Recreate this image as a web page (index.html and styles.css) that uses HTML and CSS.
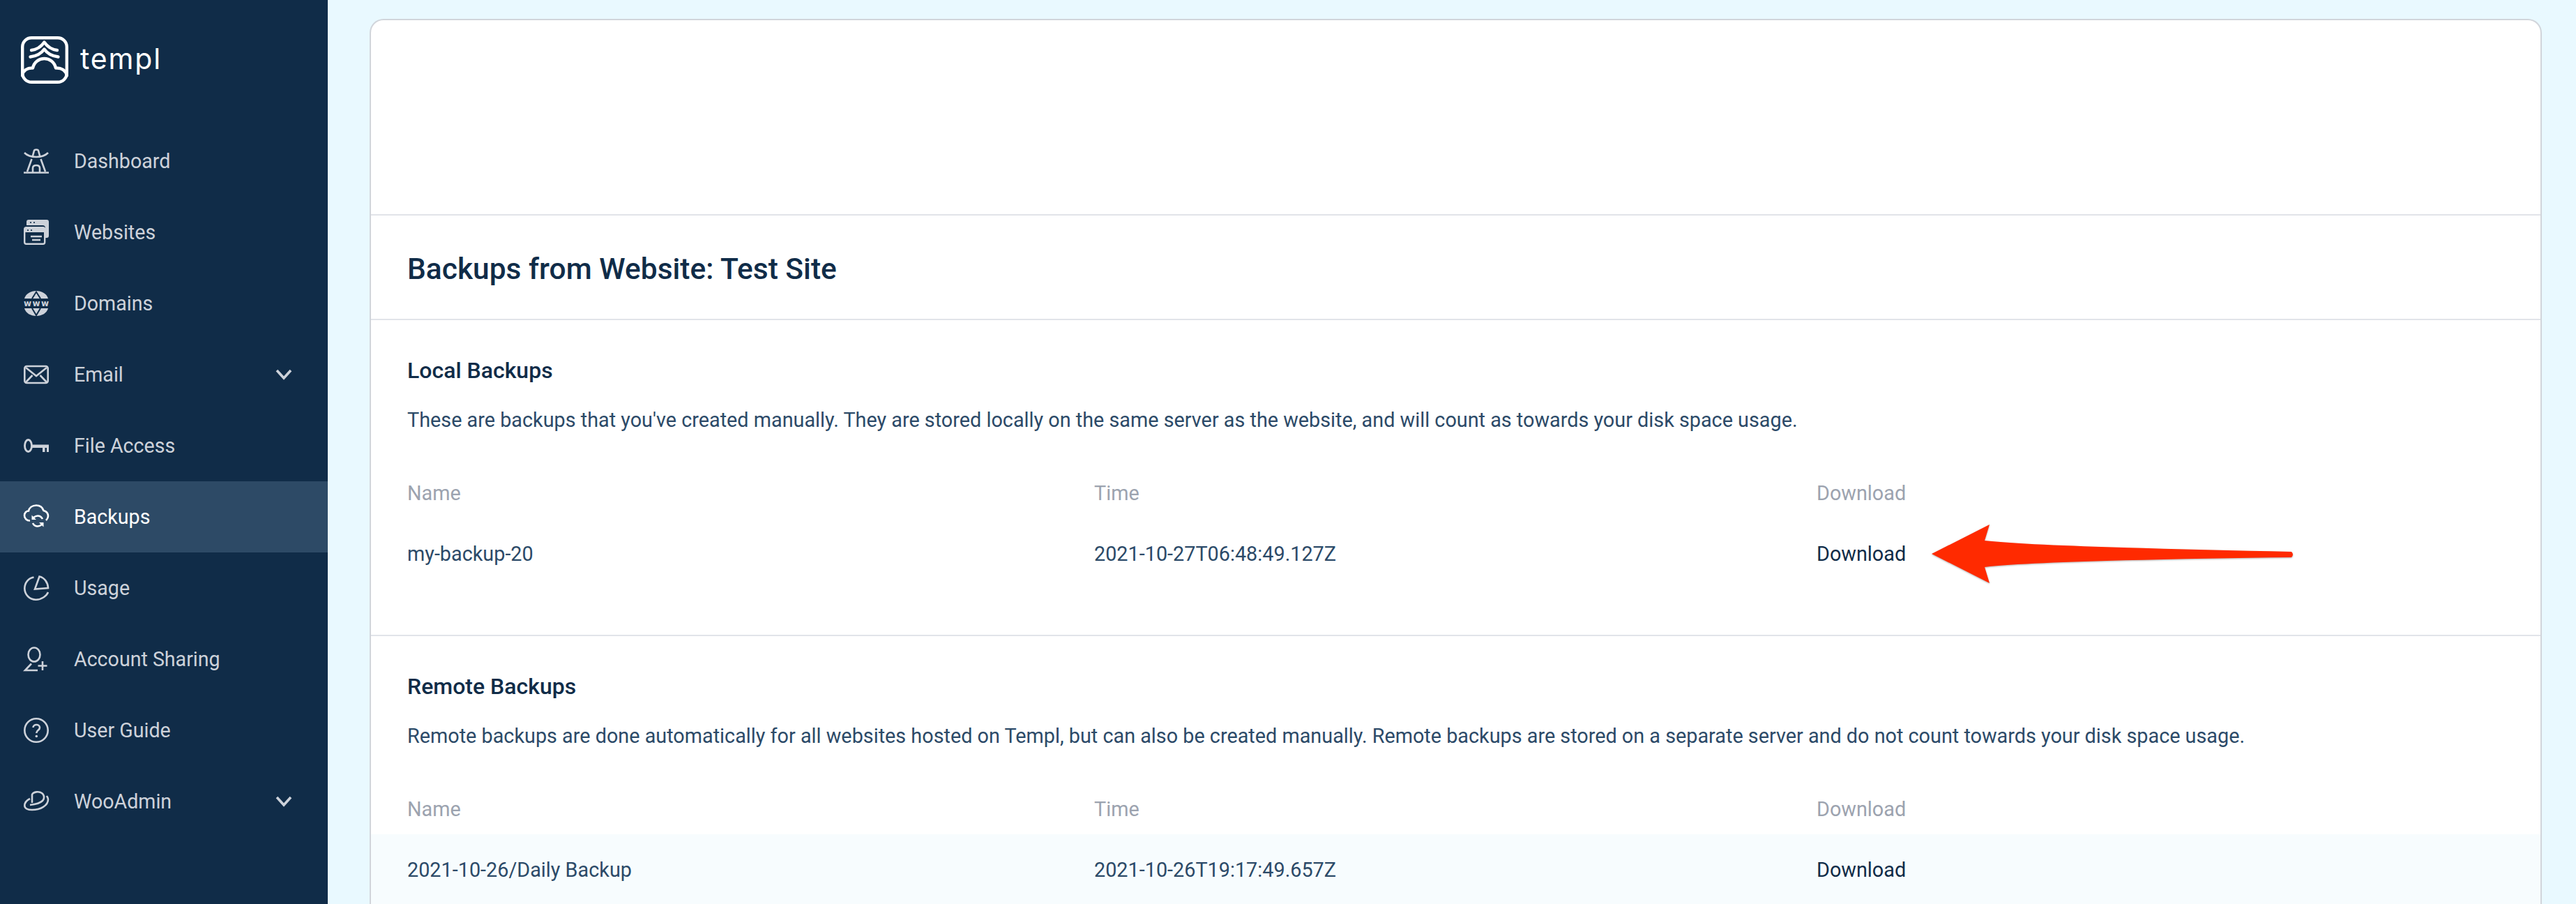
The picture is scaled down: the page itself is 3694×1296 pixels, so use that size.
FILE: index.html
```html
<!DOCTYPE html>
<html lang="en">
<head>
<meta charset="utf-8">
<title>Templ Backups</title>
<link rel="stylesheet" href="styles.css">
</head>
<body>
<div class="app">
  <aside class="sidebar">
    <div class="brand">
      <svg class="brand-mark" viewBox="0 0 68 68" fill="none" stroke="#fff" stroke-width="4.4" stroke-linecap="round" stroke-linejoin="round">
        <rect x="2.2" y="2.2" width="63.6" height="63.6" rx="13"/>
        <path d="M15 20 C23 19 29 15 33.5 8.5 C38 15 44 19 52 20"/>
        <path d="M13.5 29.5 C22 28.5 29 25 33.5 18.5 C38 25 45 28.5 53.5 29.5"/>
        <path d="M2 56 C3 49 9 45 17 45.5 C19 37 26 32 33.5 32 C41 32 48 37 50 45.5 C58 45 64 49 66 56"/>
      </svg>
      <span class="brand-name">templ</span>
    </div>
    <nav class="nav">
      <a class="nav-item">
        <svg class="nav-icon" viewBox="0 0 36 36" fill="none" stroke="currentColor" stroke-width="2.6">
          <path d="M1 6 C6 11 12 12 18 12 C24 12 30 11 35 6"/>
          <path d="M12.5 12 L15 3 Q15.5 1.5 18 1.5 Q20.5 1.5 21 3 L23.5 12"/>
          <path d="M11.5 15 L5 33 M24.5 15 L31 33"/>
          <path d="M0 34.5 H36"/>
          <path d="M13 34 V28 C13 25 15 24 18 24 C21 24 23 25 23 28 V34"/>
        </svg>
        <span>Dashboard</span>
      </a>
      <a class="nav-item">
        <svg class="nav-icon" viewBox="0 0 36 36">
          <path fill="currentColor" d="M7 0 H33 Q36 0 36 3 V23 Q36 26 33 26 H31 V12 Q31 8 27 8 H4 V3 Q4 0 7 0 Z"/>
          <rect x="1.2" y="11.2" width="29" height="23.6" rx="2.5" fill="none" stroke="currentColor" stroke-width="2.4"/>
          <path fill="currentColor" d="M2 12 H30 V18 H2 Z"/>
          <path d="M10 24 H26 M12 29 H24" stroke="currentColor" stroke-width="2.4"/>
          <circle cx="6" cy="15" r="1.1" fill="#102c48"/><circle cx="11" cy="15" r="1.1" fill="#102c48"/>
          <circle cx="10" cy="4" r="1.1" fill="#102c48"/><circle cx="15" cy="4" r="1.1" fill="#102c48"/>
        </svg>
        <span>Websites</span>
      </a>
      <a class="nav-item">
        <svg class="nav-icon" viewBox="0 0 36 36">
          <path fill="currentColor" d="M1 11 C3 4 10 0 18 0 C26 0 33 4 35 11 Z"/>
          <path fill="currentColor" d="M1 25 C3 32 10 36 18 36 C26 36 33 32 35 25 Z"/>
          <path d="M12 11 L18 1.5 L24 11 M12 25 L18 35 L24 25" fill="none" stroke="#102c48" stroke-width="2"/>
          <text class="www" x="0" y="21.5" textLength="36">www</text>
        </svg>
        <span>Domains</span>
      </a>
      <a class="nav-item">
        <svg class="nav-icon" viewBox="0 0 36 36" fill="none" stroke="currentColor" stroke-width="2.6">
          <rect x="1.3" y="6" width="33.4" height="24" rx="3"/>
          <path d="M3 8 L18 20 L33 8 M3 29 L12.5 19 M33 29 L23.5 19"/>
        </svg>
        <span>Email</span>
        <svg class="chevron" viewBox="0 0 24 16" fill="none" stroke="currentColor" stroke-width="3.6"><path d="M2 2 L12 13 L22 2"/></svg>
      </a>
      <a class="nav-item">
        <svg class="nav-icon" viewBox="0 0 36 36" fill="none" stroke="currentColor" stroke-width="2.8">
          <ellipse cx="6.5" cy="18" rx="5" ry="8.5"/>
          <path fill="currentColor" stroke="none" d="M11 16.5 H36 V27 H33 V21 H30.5 V27 H27 V21 H11 Z"/>
        </svg>
        <span>File Access</span>
      </a>
      <a class="nav-item active">
        <svg class="nav-icon" viewBox="0 0 36 36" fill="none" stroke="currentColor" stroke-width="2.6">
          <path d="M9 23.5 C4 23.5 1 20 1 16 C1 12 4 9.5 7 9.5 C8 5 12 1.5 18 1.5 C23 1.5 27 4.5 28.5 9 C32.5 10 35 13 35 17 C35 19.5 34 21 32 23"/>
          <path d="M27 21 C25.5 18 23 16.5 20 16.5 C17.5 16.5 16 17.5 14 19"/>
          <path d="M13 27 C14.5 30 17 31.5 20 31.5 C22.5 31.5 24 30.5 26 29"/>
          <path fill="currentColor" stroke="none" d="M11.5 15.5 V22 H18 Z M28.5 32.5 V26 H22 Z"/>
        </svg>
        <span>Backups</span>
      </a>
      <a class="nav-item">
        <svg class="nav-icon" viewBox="0 0 36 36" fill="none" stroke="currentColor" stroke-width="2.6">
          <path d="M14.5 2.5 C6.5 4 1.3 10.5 1.3 18.5 C1.3 27.5 8.5 34.7 17.5 34.7 C26 34.7 33 29 35 24"/>
          <path d="M22.5 1.5 C29.5 3 34.5 9.5 35 18 L16 19.5 Z"/>
        </svg>
        <span>Usage</span>
      </a>
      <a class="nav-item">
        <svg class="nav-icon" viewBox="0 0 36 36" fill="none" stroke="currentColor" stroke-width="2.6">
          <ellipse cx="15" cy="11.5" rx="8.5" ry="10"/>
          <path d="M11 24.5 L2 34 H20"/>
          <path d="M27 21 V34 M20.5 27.5 H33.5"/>
        </svg>
        <span>Account Sharing</span>
      </a>
      <a class="nav-item">
        <svg class="nav-icon" viewBox="0 0 36 36" fill="none" stroke="currentColor" stroke-width="2.6">
          <circle cx="18" cy="18" r="16.7"/>
          <path d="M13.5 14 C13.7 9 22.7 8.5 23 14 C23.1 18 18.3 17.5 18.3 22"/>
          <circle cx="18.3" cy="26.5" r="1.8" fill="currentColor" stroke="none"/>
        </svg>
        <span>User Guide</span>
      </a>
      <a class="nav-item">
        <svg class="nav-icon" viewBox="0 0 36 36" fill="none" stroke="currentColor" stroke-width="2.6">
          <path d="M9 14 C3 17 1.3 20 1.3 24 C1.3 28 6 30 12 30 C24 30 35 24 35 15 C35 13 34 12 33 10"/>
          <path d="M12 20 V8 C14 4 22 3 26 6 C30 9 30 14 27 17 C24 20 17 22 9 23"/>
        </svg>
        <span>WooAdmin</span>
        <svg class="chevron" viewBox="0 0 24 16" fill="none" stroke="currentColor" stroke-width="3.6"><path d="M2 2 L12 13 L22 2"/></svg>
      </a>
    </nav>
  </aside>
  <main class="main">
    <div class="card">
      <div class="card-top"></div>
      <header class="card-title"><h1>Backups from Website: Test Site</h1></header>
      <section class="section">
        <h2>Local Backups</h2>
        <p>These are backups that you've created manually. They are stored locally on the same server as the website, and will count as towards your disk space usage.</p>
        <div class="row head"><span>Name</span><span>Time</span><span>Download</span></div>
        <div class="row"><span>my-backup-20</span><span>2021-10-27T06:48:49.127Z</span><a class="link">Download</a></div>
      </section>
      <section class="section">
        <h2>Remote Backups</h2>
        <p>Remote backups are done automatically for all websites hosted on Templ, but can also be created manually. Remote backups are stored on a separate server and do not count towards your disk space usage.</p>
        <div class="row head"><span>Name</span><span>Time</span><span>Download</span></div>
        <div class="row alt"><span>2021-10-26/Daily Backup</span><span>2021-10-26T19:17:49.657Z</span><a class="link">Download</a></div>
      </section>
    </div>
    <svg class="arrow" viewBox="0 0 530 96" width="530" height="96">
      <path fill="#ff2a00" d="M2 49 L85 7 L78 30 C150 38 350 42 518 46 Q522 50 518 54 C350 56 150 60 78 68 L85 91 Z"/>
    </svg>
  </main>
</div>
</body>
</html>
```
FILE: styles.css
```css
* { box-sizing: border-box; }
html, body { margin: 0; height: 1296px; overflow: hidden; }
body { font-family: Roboto, "Liberation Sans", sans-serif; background: #e9f9ff; color: #102c48; }
.app { display: flex; height: 1296px; }

.sidebar { width: 470px; flex: none; background: #102c48; color: #cdd2da; }
.brand { height: 180px; padding: 52px 0 0 30px; display: flex; align-items: flex-start; gap: 17px; }
.brand-mark { width: 68px; height: 68px; display: block; }
.brand-name { font-family: Inter, sans-serif; font-size: 41px; line-height: 65px; color: #fff; letter-spacing: 1.8px; }

.nav { display: flex; flex-direction: column; }
.nav-item { height: 102px; padding: 0 51px 0 34px; display: flex; align-items: center; gap: 36px; font-size: 28.6px; }
.nav-item.active { background: #2d4a66; color: #fff; }
.nav-icon { width: 36px; height: 36px; flex: none; display: block; overflow: visible; }
.www { font-family: "DejaVu Sans", sans-serif; font-size: 12px; font-weight: 700; fill: currentColor; }
.chevron { width: 24px; height: 16px; margin-left: auto; display: block; }

.main { flex: 1; position: relative; padding: 27px 49px 0 60px; min-width: 0; }
.card { background: #fff; border: 2px solid #d1d5db; border-bottom: 0; border-radius: 20px 20px 0 0; }
.card-top { height: 280px; border-bottom: 2px solid #e1e4e9; }
.card-title { height: 150px; padding: 4px 52px 0; display: flex; align-items: center; border-bottom: 2px solid #e1e4e9; }
h1 { margin: 0; font-size: 42.5px; font-weight: 500; line-height: 1.2; color: #102c48; }

.section { padding-top: 54px; padding-bottom: 65px; border-bottom: 2px solid #e1e4e9; }
h2 { margin: 0 52px; font-size: 32px; font-weight: 500; line-height: 36px; color: #102c48; }
.section p { margin: 35px 52px 51px; font-size: 28.8px; line-height: 36px; color: #2c4a68; }

.row { display: grid; grid-template-columns: 985px 1036px 1fr; align-items: center; height: 102px; padding: 0 52px; font-size: 28.8px; color: #2c4a68; }
.row.head { height: 72px; color: #9ca3af; }
.row.alt { background: #f7fcfe; }
.link { color: #102c48; }

.arrow { position: absolute; left: 2298px; top: 745px; filter: drop-shadow(0 1px 1px rgba(0,0,0,.3)); }
```
